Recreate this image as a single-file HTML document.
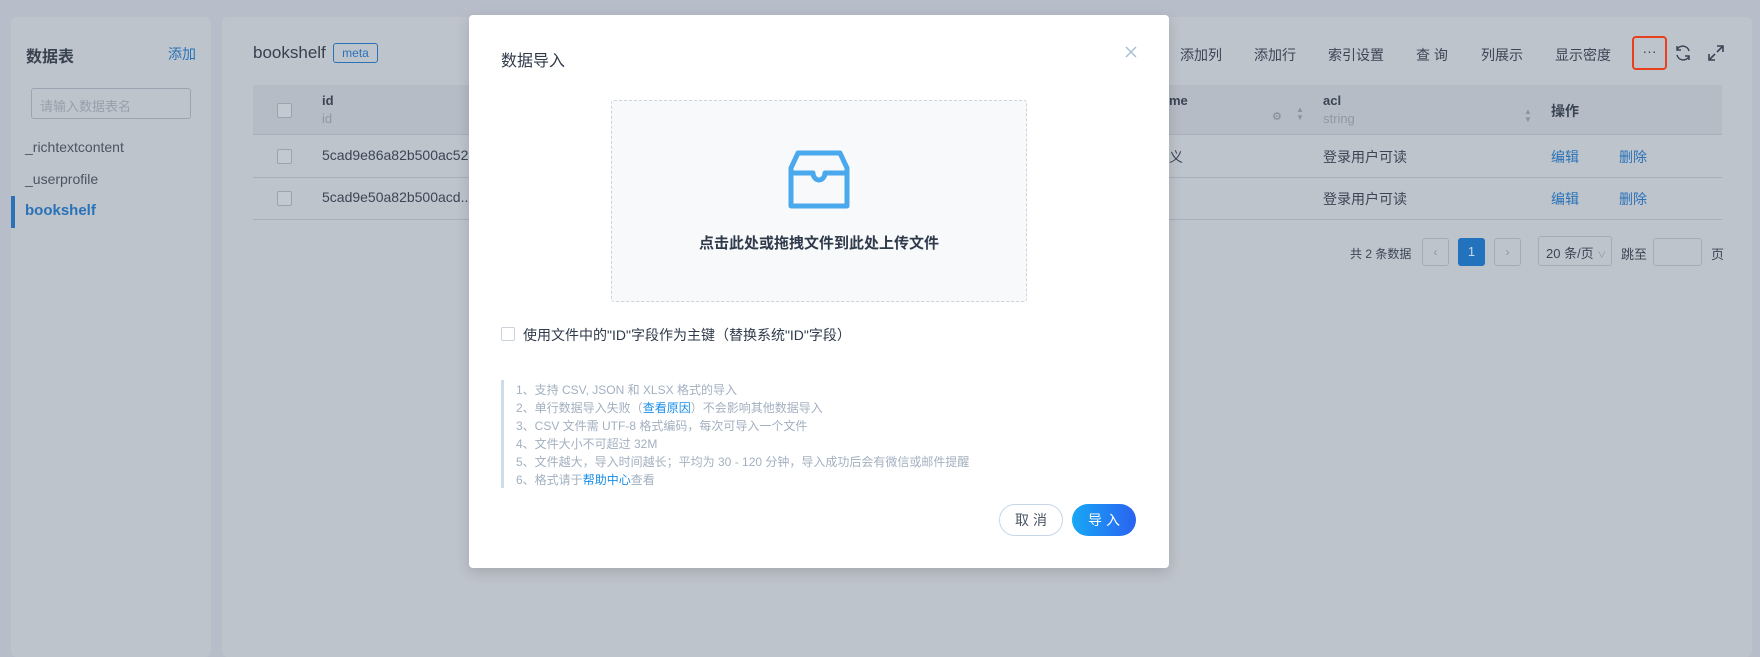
<!DOCTYPE html>
<html><head><meta charset="utf-8">
<style>
*{margin:0;padding:0;box-sizing:border-box}
body{width:1760px;height:643px;overflow:hidden;background:#b7bec9;font-family:"Liberation Sans","Noto Sans CJK SC",sans-serif;position:relative;color:#3b4555}
.a{position:absolute;white-space:nowrap}
.panel{position:absolute;background:#bec4cc;border-radius:6px}
.cb{position:absolute;width:15px;height:15px;border:1px solid #9aa3ae;border-radius:2px;background:#c3c9d0}
.blue{color:#2a72b8}
</style></head><body>
<div class="panel" style="left:11px;top:17px;width:200px;height:640px"></div>
<div class="panel" style="left:222px;top:17px;width:1530px;height:640px"></div>
<div class="a" style="left:26px;top:43px;font-size:16px;font-weight:bold;color:#3a4350">数据表</div>
<div class="a blue" style="left:168px;top:44px;font-size:14px">添加</div>
<div class="a" style="left:31px;top:88px;width:160px;height:31px;border:1px solid #9ba5b1;border-radius:3px;font-size:13px;color:#96a0ab;padding:7px 8px">请输入数据表名</div>
<div class="a" style="left:25px;top:139px;font-size:14px;color:#4a5360">_richtextcontent</div>
<div class="a" style="left:25px;top:171px;font-size:14px;color:#4a5360">_userprofile</div>
<div class="a" style="left:11px;top:196px;width:4px;height:32px;background:#2a72b8"></div>
<div class="a blue" style="left:25px;top:202px;font-size:15px;font-weight:bold">bookshelf</div>

<div class="a" style="left:253px;top:43px;font-size:17px;color:#36404e">bookshelf</div>
<div class="a blue" style="left:333px;top:43px;width:45px;height:20px;border:1px solid #2a72b8;border-radius:3px;font-size:12px;text-align:center;line-height:18px">meta</div>

<div class="a" style="left:1180px;top:45px;font-size:14px">添加列</div>
<div class="a" style="left:1254px;top:45px;font-size:14px">添加行</div>
<div class="a" style="left:1328px;top:45px;font-size:14px">索引设置</div>
<div class="a" style="left:1416px;top:45px;font-size:14px">查 询</div>
<div class="a" style="left:1481px;top:45px;font-size:14px">列展示</div>
<div class="a" style="left:1555px;top:45px;font-size:14px">显示密度</div>
<div class="a" style="left:1632px;top:36px;width:35px;height:34px;border:2px solid #e8401c;border-radius:4px;text-align:center;font-size:14px;line-height:26px">···</div>
<svg class="a" style="left:1673px;top:43px" width="20" height="20" viewBox="0 0 20 20" fill="none" stroke="#3b4555" stroke-width="1.5"><path d="M16 8A6.5 6.5 0 0 0 4 6.5M4 12a6.5 6.5 0 0 0 12 1.5"/><path d="M4 3v4h4M16 17v-4h-4"/></svg>
<svg class="a" style="left:1706px;top:43px" width="20" height="20" viewBox="0 0 20 20" fill="none" stroke="#3b4555" stroke-width="1.6"><path d="M11 3h6v6M17 3l-6 6M9 17H3v-6M3 17l6-6"/></svg>

<div class="a" style="left:253px;top:85px;width:1469px;height:50px;background:#b5bcc6;border-bottom:1px solid #a8b0bb"></div>
<div class="a" style="left:253px;top:177px;width:1469px;height:1px;background:#a8b0bb"></div>
<div class="a" style="left:253px;top:219px;width:1469px;height:1px;background:#a8b0bb"></div>
<div class="cb" style="left:277px;top:103px"></div>
<div class="cb" style="left:277px;top:149px"></div>
<div class="cb" style="left:277px;top:191px"></div>
<div class="a" style="left:322px;top:93px;font-size:13px;font-weight:bold">id</div>
<div class="a" style="left:322px;top:111px;font-size:13px;color:#8e98a4">id</div>
<div class="a" style="left:322px;top:147px;font-size:14px">5cad9e86a82b500ac52</div>
<div class="a" style="left:322px;top:189px;font-size:14px">5cad9e50a82b500acd...</div>
<div class="a" style="left:1169px;top:93px;font-size:13px;font-weight:bold">me</div>
<div class="a" style="left:1272px;top:110px;font-size:11px;color:#7f8894">⚙</div>
<div class="a" style="left:1296px;top:106px;font-size:8px;line-height:8px;color:#8a94a0">▲<br>▼</div>
<div class="a" style="left:1323px;top:93px;font-size:13px;font-weight:bold">acl</div>
<div class="a" style="left:1323px;top:111px;font-size:13px;color:#8e98a4">string</div>
<div class="a" style="left:1524px;top:108px;font-size:8px;line-height:8px;color:#8a94a0">▲<br>▼</div>
<div class="a" style="left:1551px;top:101px;font-size:14px;font-weight:bold">操作</div>
<div class="a" style="left:1169px;top:147px;font-size:14px">义</div>
<div class="a" style="left:1323px;top:147px;font-size:14px">登录用户可读</div>
<div class="a" style="left:1323px;top:189px;font-size:14px">登录用户可读</div>
<div class="a blue" style="left:1551px;top:147px;font-size:14px">编辑</div>
<div class="a blue" style="left:1619px;top:147px;font-size:14px">删除</div>
<div class="a blue" style="left:1551px;top:189px;font-size:14px">编辑</div>
<div class="a blue" style="left:1619px;top:189px;font-size:14px">删除</div>

<div class="a" style="left:1350px;top:245px;font-size:12px">共 2 条数据</div>
<div class="a" style="left:1422px;top:238px;width:27px;height:28px;border:1px solid #a3acb7;border-radius:3px;text-align:center;line-height:26px;color:#8e98a4;font-size:12px">‹</div>
<div class="a" style="left:1458px;top:238px;width:27px;height:28px;background:#2272bd;border-radius:3px;text-align:center;line-height:28px;color:#c8d8ea;font-size:13px">1</div>
<div class="a" style="left:1494px;top:238px;width:27px;height:28px;border:1px solid #a3acb7;border-radius:3px;text-align:center;line-height:26px;color:#8e98a4;font-size:12px">›</div>
<div class="a" style="left:1538px;top:236px;width:74px;height:30px;border:1px solid #a3acb7;border-radius:3px;font-size:13px;padding:6px 7px">20 条/页 <span style="font-size:9px;color:#8e98a4">∨</span></div>
<div class="a" style="left:1621px;top:244px;font-size:13px">跳至</div>
<div class="a" style="left:1653px;top:238px;width:49px;height:28px;border:1px solid #a3acb7;border-radius:3px"></div>
<div class="a" style="left:1711px;top:244px;font-size:13px">页</div>

<div class="a" style="left:469px;top:15px;width:700px;height:553px;background:#fff;border-radius:4px;box-shadow:0 4px 14px rgba(0,0,0,.15)"></div>
<div class="a" style="left:501px;top:47px;font-size:16px;color:#2f3a4a">数据导入</div>
<svg class="a" style="left:1125px;top:46px" width="12" height="12" viewBox="0 0 12 12" stroke="#a5bdd6" stroke-width="1.4"><path d="M1 1l10 10M11 1L1 11"/></svg>
<div class="a" style="left:611px;top:100px;width:416px;height:202px;border:1px dashed #cdd3da;border-radius:3px;background:#f8f9fb"></div>
<svg class="a" style="left:788px;top:148px" width="62" height="64" viewBox="0 0 62 64" fill="none" stroke="#4aa8ec" stroke-width="5" stroke-linejoin="round"><path d="M10 5h42l7 15v38H3V20z"/><path d="M3 25h22c0 4 3 7 6 7s6-3 6-7h22"/></svg>
<div class="a" style="left:611px;top:232px;width:416px;text-align:center;font-size:15px;font-weight:bold;color:#2f3a4a">点击此处或拖拽文件到此处上传文件</div>
<div class="a" style="left:501px;top:327px;width:14px;height:14px;border:1px solid #ccd2d9;border-radius:2px"></div>
<div class="a" style="left:523px;top:325px;font-size:14px;color:#2f3a4a">使用文件中的"ID"字段作为主键（替换系统"ID"字段）</div>
<div class="a" style="left:501px;top:380px;width:3px;height:108px;background:#cfdbe8"></div>
<div class="a" style="left:516px;top:381px;font-size:12px;line-height:18px;color:#a3b0c0">1、支持 CSV, JSON 和 XLSX 格式的导入<br>2、单行数据导入失败（<span style="color:#1a8ee8">查看原因</span>）不会影响其他数据导入<br>3、CSV 文件需 UTF-8 格式编码，每次可导入一个文件<br>4、文件大小不可超过 32M<br>5、文件越大，导入时间越长；平均为 30 - 120 分钟，导入成功后会有微信或邮件提醒<br>6、格式请于<span style="color:#1a8ee8">帮助中心</span>查看</div>
<div class="a" style="left:999px;top:504px;width:64px;height:32px;border:1px solid #c7d6e6;border-radius:16px;text-align:center;line-height:30px;font-size:14px;color:#4a5566;letter-spacing:4px;padding-left:4px">取消</div>
<div class="a" style="left:1072px;top:504px;width:64px;height:32px;border-radius:16px;background:linear-gradient(90deg,#17a8f5,#2a62f0);text-align:center;line-height:32px;font-size:14px;color:#fff;letter-spacing:4px;padding-left:4px">导入</div>
</body></html>
